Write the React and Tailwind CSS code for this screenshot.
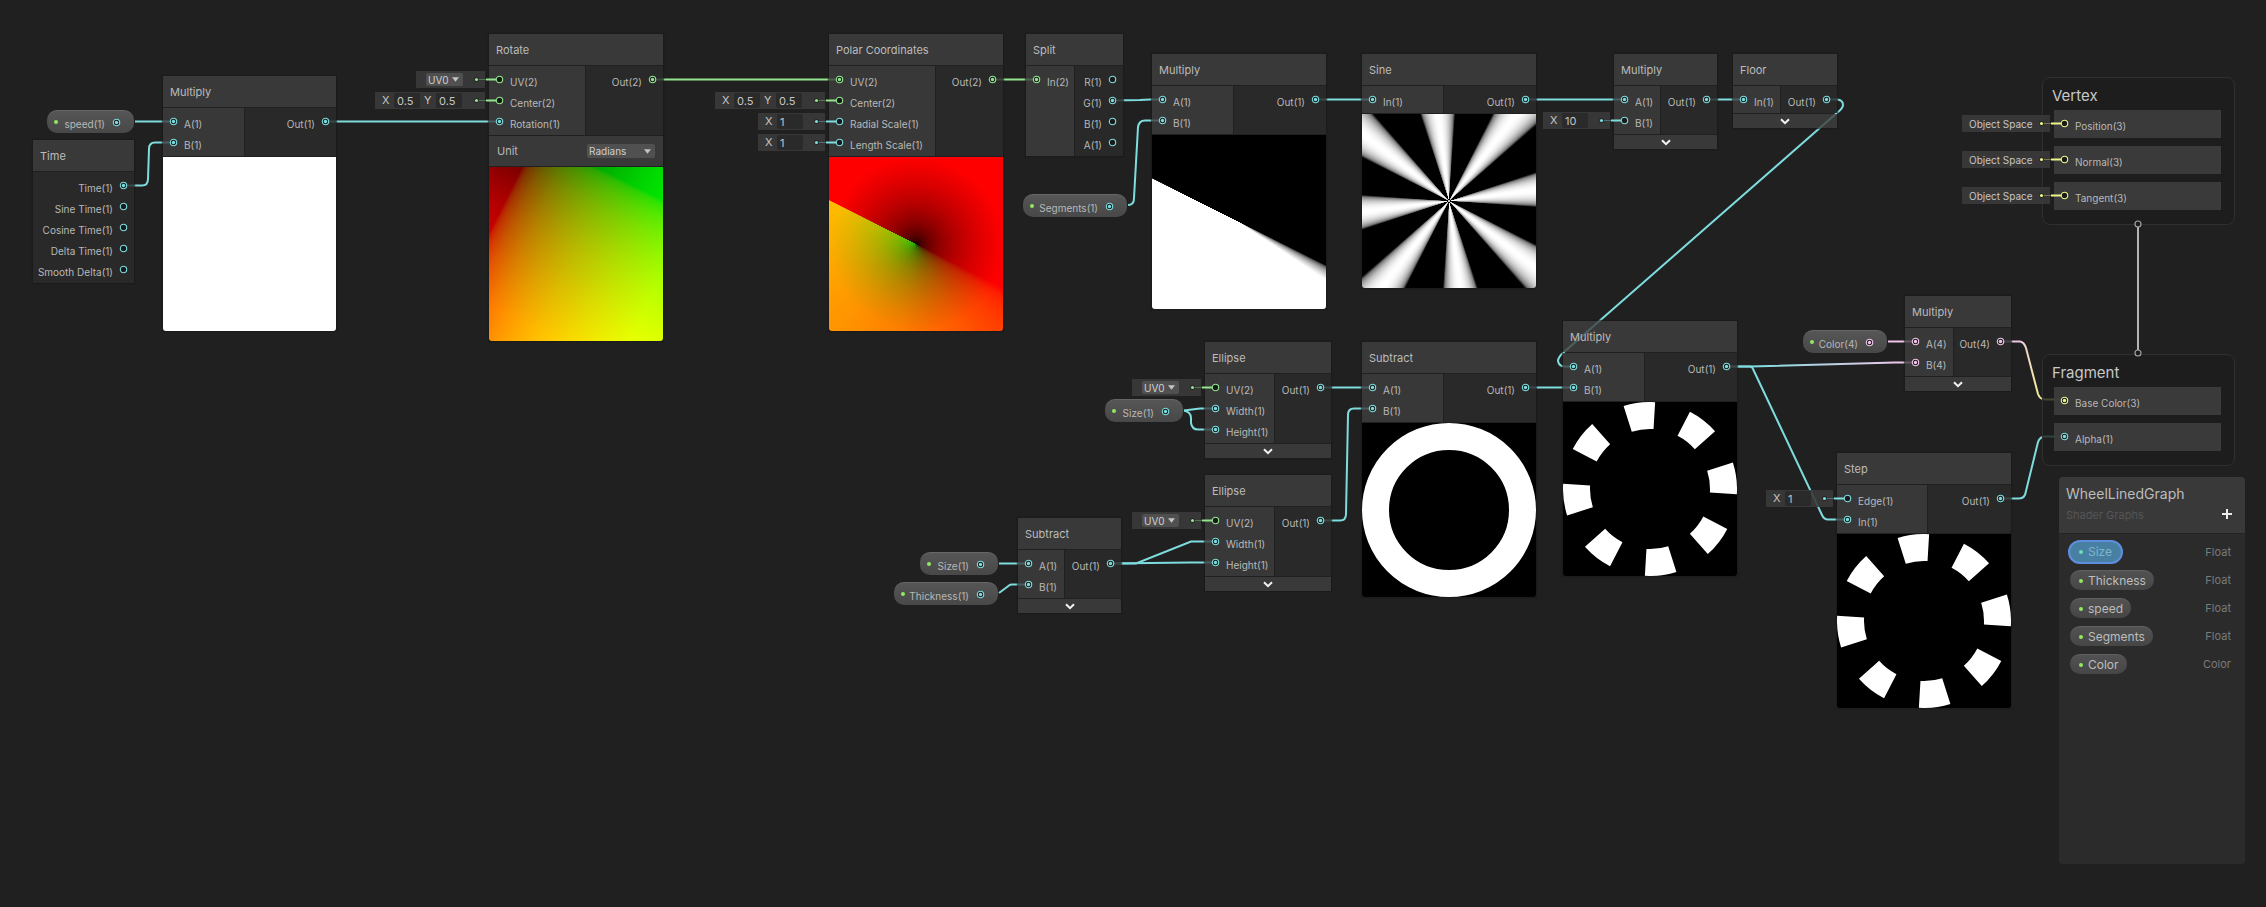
import React from "react";

const PORT = {
  cyan: "#7edcde",
  green: "#92e58e",
  yellow: "#eef587",
  pink: "#f0c6ea",
};

/* ---------- shader previews ---------- */

// linear 0..1 -> sRGB 0..255
const encode = (v) => {
  const c = Math.min(1, Math.max(0, v));
  return Math.round(255 * (c <= 0.0031308 ? 12.92 * c : 1.055 * c ** (1 / 2.4) - 0.055));
};
const RAMP = [0, 0.0125, 0.025, 0.05, 0.1, 0.2, 0.3, 0.4, 0.5, 0.6, 0.7, 0.8, 0.9, 1];
const red = (v) => `rgb(${encode(v)},0,0)`;
const green = (v) => `rgb(0,${encode(v)},0)`;
const grey = (v) => `rgb(${encode(v)},${encode(v)},${encode(v)})`;
const SEAM = 116.6;

const linearRamp = (angle, color) =>
  `linear-gradient(${angle}deg, ${RAMP.map((v) => `${color(v)} ${(29.7 + 174 * v).toFixed(1)}px`).join(",")})`;

const rotateFill = {
  backgroundImage: `${linearRamp(SEAM, green)}, ${linearRamp(SEAM + 90, red)}`,
  backgroundBlendMode: "screen",
};

const polarFill = {
  backgroundImage: [
    `conic-gradient(from ${SEAM}deg, ${RAMP.filter((v) => v <= 0.5)
      .map((v) => `${green(v)} ${v * 360}deg`)
      .join(",")}, #000 180.3deg)`,
    `radial-gradient(circle at center, ${RAMP.map((v) => `${red(v)} ${v * 87}px`).join(",")})`,
  ].join(","),
  backgroundBlendMode: "screen",
};

const halfFill = {
  backgroundImage: `conic-gradient(from ${SEAM}deg, ${RAMP.map((v) => `${grey(v)} ${(v * 7.2).toFixed(2)}deg`).join(
    ","
  )}, #fff 179.8deg, #000 180.2deg)`,
};

const sineFill = {
  backgroundImage: `repeating-conic-gradient(from ${SEAM}deg, ${Array.from({ length: 17 }, (_, i) => {
    const v = Math.sin((Math.PI * i) / 16);
    return `${grey(v)} ${((22.5 * i) / 16).toFixed(2)}deg`;
  }).join(",")}, #000 45deg)`,
};

function Shade({ fill }) {
  return <div className="h-[174px] w-full rounded-b-[3px]" style={fill} />;
}

function Ring() {
  return (
    <svg viewBox="0 0 174 174" className="block h-[174px] w-full rounded-b-[3px] bg-black" aria-hidden="true">
      <circle cx="87" cy="87" r="73.5" fill="none" stroke="#fff" strokeWidth="27" />
    </svg>
  );
}

function Wedges() {
  const at = (r, deg) => {
    const a = (deg * Math.PI) / 180;
    return `${(87 + r * Math.sin(a)).toFixed(2)} ${(87 - r * Math.cos(a)).toFixed(2)}`;
  };
  return (
    <svg viewBox="0 0 174 174" className="block h-[174px] w-full rounded-b-[3px] bg-black" aria-hidden="true">
      {Array.from({ length: 8 }, (_, i) => {
        const a = SEAM + 0.72 + 45 * i;
        const b = SEAM + 21.78 + 45 * i;
        return (
          <path
            key={i}
            fill="#fff"
            d={`M${at(60, a)} L${at(87, a)} A87 87 0 0 1 ${at(87, b)} L${at(60, b)} A60 60 0 0 0 ${at(60, a)}Z`}
          />
        );
      })}
    </svg>
  );
}

/* ---------- small parts ---------- */

function Port({ color = "cyan", on = false }) {
  return (
    <svg viewBox="0 0 9 9" className="h-[9px] w-[9px] shrink-0" aria-hidden="true">
      <circle cx="4.5" cy="4.5" r="3.2" fill="#191b1b" stroke={PORT[color]} strokeWidth="1.1" />
      {on && <circle cx="4.5" cy="4.5" r="1.7" fill={PORT[color]} />}
    </svg>
  );
}

function Caret() {
  return (
    <svg viewBox="0 0 8 5" className="pointer-events-none absolute right-1 h-[5px] w-[7px]" aria-hidden="true">
      <path d="M0 0h8L4 5z" fill="#c4c4c4" />
    </svg>
  );
}

function Field({ axis, value, name }) {
  return (
    <label className="flex items-center">
      <span className="w-[12px]">{axis}</span>
      <input
        defaultValue={value}
        aria-label={`${name} ${axis}`}
        className="h-[15px] w-[26px] rounded-[2px] bg-[#2a2a2a] px-[3px] text-[11px] text-[#c6c6c6] outline-none"
      />
    </label>
  );
}

// Default value attached to the left of an unconnected input.
function Slot({ color, width, children }) {
  return (
    <div
      className={`absolute right-full top-[2px] mr-[4px] flex h-[17px] items-center bg-[#3a3a3a]/90 pl-[7px] leading-none text-[#c6c6c6] ${width}`}
    >
      {children}
      <svg viewBox="0 0 24 7" className="absolute left-full -ml-[11px] h-[7px] w-[24px]" aria-hidden="true">
        <path d="M5 3.5H12" stroke={PORT[color]} strokeOpacity="0.35" strokeWidth="1" />
        <circle cx="2.5" cy="3.5" r="2.3" fill="#1c1c1c" />
        <circle cx="2.5" cy="3.5" r="1.6" fill={PORT[color]} />
        <path d="M12 3.5H22" stroke={PORT[color]} strokeWidth="2" />
      </svg>
    </div>
  );
}

function UVSlot() {
  return (
    <Slot color="green" width="w-[69px] text-[10px]">
      <span className="relative ml-[3px] flex items-center">
        <select
          aria-label="UV channel"
          className="h-[13px] w-[37px] appearance-none rounded-[2px] bg-[#505050] pl-[2px] text-[10px] leading-none text-[#d0d0d0] outline-none"
        >
          <option>UV0</option>
        </select>
        <Caret />
      </span>
    </Slot>
  );
}

const CenterSlot = () => (
  <Slot color="green" width="w-[110px] text-[11px]">
    <div className="flex gap-[4px]">
      <Field axis="X" value="0.5" name="Center" />
      <Field axis="Y" value="0.5" name="Center" />
    </div>
  </Slot>
);

const XSlot = ({ value, name }) => (
  <Slot color="cyan" width="w-[67px] text-[11px]">
    <Field axis="X" value={value} name={name} />
  </Slot>
);

function In({ label, color, on, slot }) {
  return (
    <div className="relative flex h-[21px] items-center gap-[6px] pl-[6px]">
      <Port color={color} on={on} />
      <span className="whitespace-nowrap pt-1 leading-none">{label}</span>
      {slot}
    </div>
  );
}

function Out({ label, color, on }) {
  return (
    <div className="flex h-[21px] items-center justify-end gap-[6px] pr-[6px]">
      <span className="whitespace-nowrap pt-1 leading-none">{label}</span>
      <Port color={color} on={on} />
    </div>
  );
}

function Collapse() {
  return (
    <button type="button" aria-label="Toggle preview" className="flex h-[14px] w-full items-center justify-center bg-[#404040]/80">
      <svg viewBox="0 0 10 7" className="h-[7px] w-[10px]" aria-hidden="true">
        <path d="M1 1.2L5 5.2L9 1.2" fill="none" stroke="#f2f2f2" strokeWidth="2" />
      </svg>
    </button>
  );
}

function Node({ title, at, left, inputs, outputs, settings, children }) {
  return (
    <section className={`absolute flex flex-col gap-px text-[10px] text-[#b8b8b8] shadow-[0_0_1px_1px_rgba(25,25,25,0.6)] ${at}`}>
      <h2 className="flex h-[31px] items-center bg-[#404040]/80 pl-[7px] pt-px text-[11px] text-[#bcbcbc]">{title}</h2>
      <div className="flex gap-px">
        {inputs && <div className={`bg-[#3e3e3e]/80 py-[3px] ${left}`}>{inputs}</div>}
        <div className="flex-1 bg-[#2c2c2c]/85 py-[3px]">{outputs}</div>
      </div>
      {settings}
      {children}
    </section>
  );
}

function Pill({ label, color = "cyan", at }) {
  return (
    <div
      className={`absolute flex h-[23px] items-center rounded-[10px] border-t border-[#666] bg-linear-to-b from-[#565656] to-[#484848] pl-[7px] pr-[13px] text-[10px] text-[#b8b8b8] ${at}`}
    >
      <span className="h-1 w-1 rounded-full bg-[#92e860]" />
      <span className="ml-auto whitespace-nowrap pt-1 leading-none">{label}</span>
      <span className="ml-[7px] flex">
        <Port color={color} on />
      </span>
    </div>
  );
}

/* ---------- edges ---------- */

const CYAN_EDGES = [
  "M135 121.5H173",
  "M123 185.5H142Q148 185.5 148 179L149 149Q149 142.5 155 142.5H173",
  "M326 121.5H499",
  "M1112 100.5L1140 100L1150 99.5H1162",
  "M1128 205Q1134 205 1134 198L1138 127Q1139 120.5 1145 120.5H1162",
  "M1315 99.5H1372",
  "M1525 99.5H1624",
  "M1706 99.5H1743",
  "M1827 99.5H1837Q1843 100 1843 105Q1843 108 1838 112L1564 352Q1558 357 1558 361Q1559 366.5 1565 366.5H1573",
  "M1321 387.5H1372",
  "M1184 410.5L1200 408.5H1215",
  "M1184 410.5Q1191 412 1191 418V423Q1192 429.5 1198 429.5H1215",
  "M1321 520.5H1340Q1346 520.5 1346 514L1348 415Q1348 408.5 1354 408.5H1372",
  "M1110 563.5H1136L1191 541.5H1215",
  "M1110 563.5L1190 562.5H1215",
  "M999 563.5H1028",
  "M999 593L1009 585.5Q1010 584.5 1012 584.5H1028",
  "M1525 387.5H1573",
  "M1727 366.5H1750Q1752 366.5 1753 369L1822 515Q1824 519.5 1828 519.5H1847",
  "M2000 498.5H2019Q2025 498.5 2026 491L2038 442Q2040 436.5 2045 436.5H2065",
];

function Edges() {
  return (
    <svg className="pointer-events-none absolute left-0 top-0 h-[907px] w-[2266px]" viewBox="0 0 2266 907" fill="none" strokeWidth="2" aria-hidden="true">
      <defs>
        <linearGradient id="toPink" gradientUnits="userSpaceOnUse" x1="1750" y1="0" x2="1900" y2="0">
          <stop offset="0" stopColor={PORT.cyan} />
          <stop offset="1" stopColor={PORT.pink} />
        </linearGradient>
        <linearGradient id="toYellow" gradientUnits="userSpaceOnUse" x1="2018" y1="0" x2="2044" y2="0">
          <stop offset="0" stopColor={PORT.pink} />
          <stop offset="1" stopColor={PORT.yellow} />
        </linearGradient>
      </defs>
      <g stroke={PORT.cyan}>
        {CYAN_EDGES.map((d) => (
          <path key={d} d={d} />
        ))}
      </g>
      <g stroke={PORT.green}>
        <path d="M652 79.5H839" />
        <path d="M992 79.5H1036" />
      </g>
      <path d="M1888 341.5H1915" stroke={PORT.pink} />
      <path d="M1727 366.5H1750L1895 362.5H1915" stroke="url(#toPink)" />
      <path d="M2000 341.5H2020Q2024 342 2026 348L2038 394Q2040 399.5 2045 399.5H2065" stroke="url(#toYellow)" />
    </svg>
  );
}

/* ---------- master stack ---------- */

function Context({ title, at, children }) {
  return (
    <section className={`absolute w-[193px] rounded-[8px] border border-[#303030] bg-[#1d1d1d]/80 pb-[14px] pl-[11px] pr-[13px] ${at}`}>
      <h2 className="flex h-8 items-center pt-1 -ml-[2px] text-[15px] text-[#c8c8c8]">{title}</h2>
      <div className="flex flex-col gap-2">{children}</div>
    </section>
  );
}

function Block({ children }) {
  return <div className="h-7 bg-[#3e3e3e]/90 pt-[3px] text-[10px] text-[#b8b8b8]">{children}</div>;
}

const SpaceSlot = () => (
  <Slot color="yellow" width="w-[88px] text-[10px]">
    Object Space
  </Slot>
);

/* ---------- blackboard ---------- */

const PROPERTIES = [
  { name: "Size", type: "Float", selected: true },
  { name: "Thickness", type: "Float" },
  { name: "speed", type: "Float" },
  { name: "Segments", type: "Float" },
  { name: "Color", type: "Color" },
];

function Blackboard() {
  return (
    <aside className="absolute right-[21px] top-[477px] h-[387px] w-[186px] overflow-hidden rounded-[4px] bg-[#2b2b2b]">
      <header className="relative h-[57px] border-b border-[#242424] bg-[#393939] pl-[7px] pt-[7px]">
        <h1 className="text-[14px] leading-[19px] text-[#bcbcbc]">WheelLinedGraph</h1>
        <p className="pt-[4px] text-[11px] leading-[16px] text-[#565656]">Shader Graphs</p>
        <button type="button" aria-label="Add property" className="absolute bottom-[13px] right-[12px] flex">
          <svg viewBox="0 0 12 12" className="h-3 w-3" aria-hidden="true">
            <path d="M6 1V11M1 6H11" stroke="#ececec" strokeWidth="2" />
          </svg>
        </button>
      </header>
      <ul className="pt-[4px] text-[12px]">
        {PROPERTIES.map((p) => (
          <li key={p.name} className="flex h-7 items-center justify-between pl-[11px] pr-[14px]">
            <button
              type="button"
              className={
                p.selected
                  ? "flex h-6 -ml-[2px] items-center gap-[5px] rounded-full border-2 border-[#5f8fdc] bg-[#4780a3] pl-[9px] pr-[9px] leading-none text-[#7fb4cc]"
                  : "flex h-5 items-center gap-[5px] rounded-full border-t border-[#606060] bg-linear-to-b from-[#525252] to-[#464646] pl-[9px] pr-[8px] leading-none text-[#bdbdbd]"
              }
            >
              <span className={p.selected ? "h-1 w-1 rounded-full bg-[#6fd8b0]" : "h-1 w-1 rounded-full bg-[#92e860]"} />
              {p.name}
            </button>
            <span className="text-[11px] text-[#7a7a7a]">{p.type}</span>
          </li>
        ))}
      </ul>
    </aside>
  );
}

/* ---------- page ---------- */

export default function App() {
  return (
    <main className="relative min-h-screen overflow-hidden bg-[#202020] font-[Inter,sans-serif]">
      <Edges />

      <Pill label="speed(1)" at="left-[47px] top-[110px] w-[87px]" />
      <Pill label="Segments(1)" at="left-[1023px] top-[194px] w-[104px]" />
      <Pill label="Size(1)" at="left-[1105px] top-[399px] w-[78px]" />
      <Pill label="Size(1)" at="left-[920px] top-[552px] w-[78px]" />
      <Pill label="Thickness(1)" at="left-[894px] top-[582px] w-[104px]" />
      <Pill label="Color(4)" color="pink" at="left-[1803px] top-[330px] w-[84px]" />

      <Node
        title="Time"
        at="left-[33px] top-[140px] w-[101px]"
        outputs={
          <>
            <Out label="Time(1)" on />
            <Out label="Sine Time(1)" />
            <Out label="Cosine Time(1)" />
            <Out label="Delta Time(1)" />
            <Out label="Smooth Delta(1)" />
          </>
        }
      />

      <Node
        title="Multiply"
        at="left-[163px] top-[76px] w-[173px]"
        left="w-[81px]"
        inputs={
          <>
            <In label="A(1)" on />
            <In label="B(1)" on />
          </>
        }
        outputs={<Out label="Out(1)" on />}
      >
        <Shade fill={{ backgroundColor: "#fff" }} />
      </Node>

      <Node
        title="Rotate"
        at="left-[489px] top-[34px] w-[174px]"
        left="w-[96px]"
        inputs={
          <>
            <In label="UV(2)" color="green" slot={<UVSlot />} />
            <In label="Center(2)" color="green" slot={<CenterSlot />} />
            <In label="Rotation(1)" on />
          </>
        }
        outputs={<Out label="Out(2)" color="green" on />}
        settings={
          <label className="flex h-[30px] items-center justify-between bg-[#404040]/80 px-[8px] text-[11px]">
            Unit
            <span className="relative flex items-center">
              <select className="h-[14px] w-[68px] appearance-none rounded-[2px] bg-[#505050] pl-[2px] text-[10px] leading-none text-[#cfcfcf] outline-none">
                <option>Radians</option>
              </select>
              <Caret />
            </span>
          </label>
        }
      >
        <Shade fill={rotateFill} />
      </Node>

      <Node
        title="Polar Coordinates"
        at="left-[829px] top-[34px] w-[174px]"
        left="w-[106px]"
        inputs={
          <>
            <In label="UV(2)" color="green" on />
            <In label="Center(2)" color="green" slot={<CenterSlot />} />
            <In label="Radial Scale(1)" slot={<XSlot value="1" name="Radial Scale" />} />
            <In label="Length Scale(1)" slot={<XSlot value="1" name="Length Scale" />} />
          </>
        }
        outputs={<Out label="Out(2)" color="green" on />}
      >
        <Shade fill={polarFill} />
      </Node>

      <Node
        title="Split"
        at="left-[1026px] top-[34px] w-[97px]"
        left="w-[48px]"
        inputs={<In label="In(2)" color="green" on />}
        outputs={
          <>
            <Out label="R(1)" />
            <Out label="G(1)" on />
            <Out label="B(1)" />
            <Out label="A(1)" />
          </>
        }
      />

      <Node
        title="Multiply"
        at="left-[1152px] top-[54px] w-[174px]"
        left="w-[81px]"
        inputs={
          <>
            <In label="A(1)" on />
            <In label="B(1)" on />
          </>
        }
        outputs={<Out label="Out(1)" on />}
      >
        <Shade fill={halfFill} />
      </Node>

      <Node
        title="Sine"
        at="left-[1362px] top-[54px] w-[174px]"
        left="w-[81px]"
        inputs={<In label="In(1)" on />}
        outputs={<Out label="Out(1)" on />}
      >
        <Shade fill={sineFill} />
      </Node>

      <Node
        title="Multiply"
        at="left-[1614px] top-[54px] w-[103px]"
        left="w-[46px]"
        inputs={
          <>
            <In label="A(1)" on />
            <In label="B(1)" slot={<XSlot value="10" name="B" />} />
          </>
        }
        outputs={<Out label="Out(1)" on />}
      >
        <Collapse />
      </Node>

      <Node
        title="Floor"
        at="left-[1733px] top-[54px] w-[104px]"
        left="w-[47px]"
        inputs={<In label="In(1)" on />}
        outputs={<Out label="Out(1)" on />}
      >
        <Collapse />
      </Node>

      <Node
        title="Ellipse"
        at="left-[1205px] top-[342px] w-[126px]"
        left="w-[69px]"
        inputs={
          <>
            <In label="UV(2)" color="green" slot={<UVSlot />} />
            <In label="Width(1)" on />
            <In label="Height(1)" on />
          </>
        }
        outputs={<Out label="Out(1)" on />}
      >
        <Collapse />
      </Node>

      <Node
        title="Ellipse"
        at="left-[1205px] top-[475px] w-[126px]"
        left="w-[69px]"
        inputs={
          <>
            <In label="UV(2)" color="green" slot={<UVSlot />} />
            <In label="Width(1)" on />
            <In label="Height(1)" on />
          </>
        }
        outputs={<Out label="Out(1)" on />}
      >
        <Collapse />
      </Node>

      <Node
        title="Subtract"
        at="left-[1018px] top-[518px] w-[103px]"
        left="w-[46px]"
        inputs={
          <>
            <In label="A(1)" on />
            <In label="B(1)" on />
          </>
        }
        outputs={<Out label="Out(1)" on />}
      >
        <Collapse />
      </Node>

      <Node
        title="Subtract"
        at="left-[1362px] top-[342px] w-[174px]"
        left="w-[81px]"
        inputs={
          <>
            <In label="A(1)" on />
            <In label="B(1)" on />
          </>
        }
        outputs={<Out label="Out(1)" on />}
      >
        <Ring />
      </Node>

      <Node
        title="Multiply"
        at="left-[1563px] top-[321px] w-[174px]"
        left="w-[81px]"
        inputs={
          <>
            <In label="A(1)" on />
            <In label="B(1)" on />
          </>
        }
        outputs={<Out label="Out(1)" on />}
      >
        <Wedges />
      </Node>

      <Node
        title="Multiply"
        at="left-[1905px] top-[296px] w-[106px]"
        left="w-[48px]"
        inputs={
          <>
            <In label="A(4)" color="pink" on />
            <In label="B(4)" color="pink" on />
          </>
        }
        outputs={<Out label="Out(4)" color="pink" on />}
      >
        <Collapse />
      </Node>

      <Node
        title="Step"
        at="left-[1837px] top-[453px] w-[174px]"
        left="w-[90px]"
        inputs={
          <>
            <In label="Edge(1)" slot={<XSlot value="1" name="Edge" />} />
            <In label="In(1)" on />
          </>
        }
        outputs={<Out label="Out(1)" on />}
      >
        <Wedges />
      </Node>

      <Context title="Vertex" at="left-[2042px] top-[77px]">
        <Block>
          <In label="Position(3)" color="yellow" slot={<SpaceSlot />} />
        </Block>
        <Block>
          <In label="Normal(3)" color="yellow" slot={<SpaceSlot />} />
        </Block>
        <Block>
          <In label="Tangent(3)" color="yellow" slot={<SpaceSlot />} />
        </Block>
      </Context>

      <Context title="Fragment" at="left-[2042px] top-[354px]">
        <Block>
          <In label="Base Color(3)" color="yellow" on />
        </Block>
        <Block>
          <In label="Alpha(1)" color="cyan" on />
        </Block>
      </Context>

      <svg viewBox="0 0 10 138" className="pointer-events-none absolute left-[2133px] top-[219px] h-[138px] w-[10px]" aria-hidden="true">
        <path d="M5 8V131" stroke="#b4b4b4" strokeWidth="2" />
        <circle cx="5" cy="5" r="3" fill="#1c1c1c" stroke="#a8a8a8" strokeWidth="1.1" />
        <circle cx="5" cy="134" r="3" fill="#1c1c1c" stroke="#a8a8a8" strokeWidth="1.1" />
      </svg>

      <Blackboard />
    </main>
  );
}
